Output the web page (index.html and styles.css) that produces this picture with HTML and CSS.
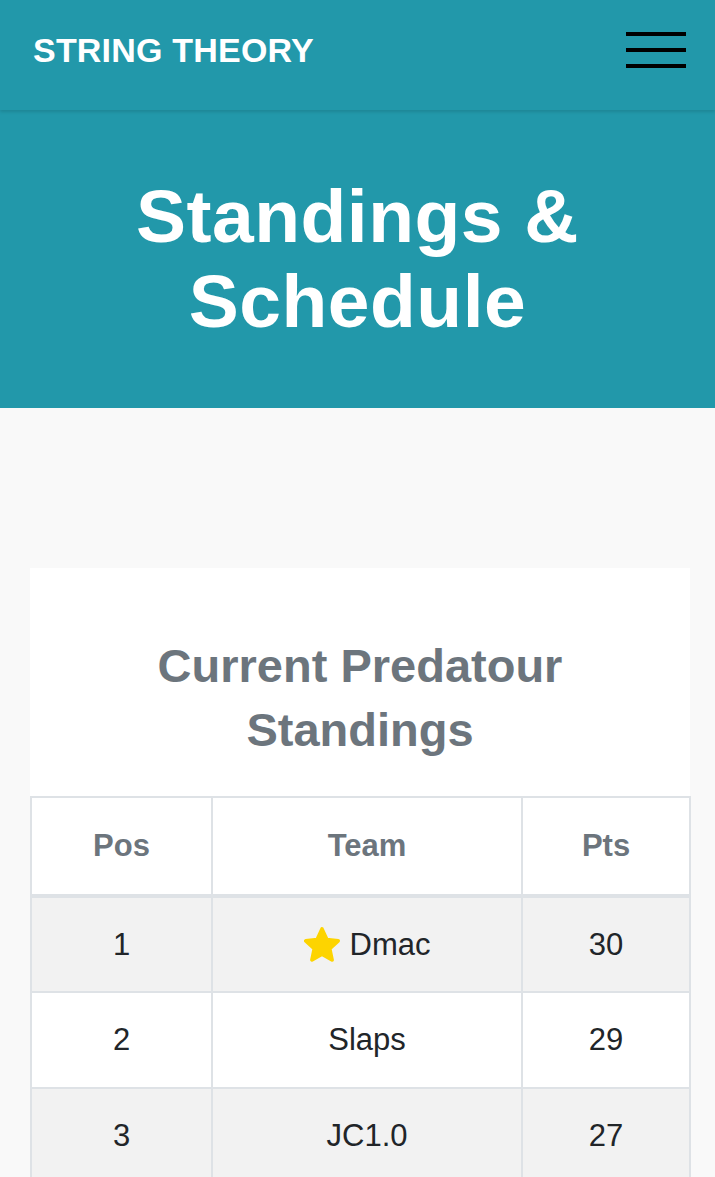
FILE: index.html
```html
<!DOCTYPE html>
<html lang="en">
<head>
<meta charset="utf-8">
<title>Standings &amp; Schedule</title>
<link rel="stylesheet" href="styles.css">
</head>
<body>
<header class="navbar">
  <a class="brand" href="#">STRING THEORY</a>
  <button class="toggler" aria-label="Menu">
    <span class="bar"></span><span class="bar"></span><span class="bar"></span>
  </button>
</header>
<section class="hero">
  <h1 class="hero-title">Standings &amp; Schedule</h1>
</section>
<main class="content">
  <div class="card">
    <h2 class="card-title">Current Predatour Standings</h2>
    <table class="standings">
      <thead>
        <tr><th class="c-pos">Pos</th><th class="c-team">Team</th><th class="c-pts">Pts</th></tr>
      </thead>
      <tbody>
        <tr class="odd"><td>1</td><td><div class="team"><svg class="star" viewBox="2 1.5 20 20" width="36" height="36"><path d="M12 2.6l2.7 5.9 6.3.7-4.7 4.3 1.3 6.3L12 16.6l-5.6 3.2 1.3-6.3L3 9.2l6.3-.7z" fill="#fdd400" stroke="#fdd400" stroke-width="2" stroke-linejoin="round"/></svg><span>Dmac</span></div></td><td>30</td></tr>
        <tr><td>2</td><td>Slaps</td><td>29</td></tr>
        <tr class="odd"><td>3</td><td>JC1.0</td><td>27</td></tr>
      </tbody>
    </table>
  </div>
</main>
</body>
</html>
```

FILE: styles.css
```css
* { box-sizing: border-box; }
html, body { margin: 0; padding: 0; }
body {
  background: #f9f9f9;
  font-family: "Liberation Sans", Arial, sans-serif;
  color: #212529;
}
.navbar {
  position: relative;
  z-index: 2;
  height: 110px;
  background: #2298aa;
  display: flex;
  align-items: center;
  justify-content: space-between;
  padding: 0 29px 10px 33px;
  box-shadow: 0 2px 3px rgba(0, 0, 0, 0.12);
}
.brand {
  color: #fff;
  font-weight: 700;
  font-size: 34px;
  text-decoration: none;
  letter-spacing: 0.2px;
}
.toggler {
  background: none;
  border: 0;
  padding: 0;
  width: 60px;
  display: flex;
  flex-direction: column;
  gap: 12px;
}
.bar {
  display: block;
  height: 4px;
  width: 60px;
  background: #000;
}
.hero {
  background: #2298aa;
  padding: 64px 20px 64px;
  height: 298px;
}
.hero-title {
  margin: 0;
  color: #fff;
  text-align: center;
  font-size: 75px;
  line-height: 85px;
  font-weight: 700;
  letter-spacing: 0.5px;
}
.content {
  padding: 160px 25px 60px 30px;
}
.card {
  background: #fff;
  width: 660px;
}
.card-title {
  margin: 0;
  padding: 66px 40px 34px;
  text-align: center;
  color: #6c757d;
  font-size: 47px;
  line-height: 64px;
  font-weight: 700;
}
.standings {
  width: 100%;
  border-collapse: collapse;
  table-layout: fixed;
}
.standings th, .standings td {
  border: 2px solid #dee2e6;
  text-align: center;
  vertical-align: middle;
  height: 96px;
  padding: 0;
}
.standings th {
  color: #6c757d;
  font-size: 31px;
  font-weight: 700;
  height: 99px;
  border-bottom-width: 4px;
}
.standings td {
  font-size: 31px;
  color: #212529;
}
.c-pos { width: 181px; }
.c-team { width: 310px; }
.c-pts { width: 168px; }
.standings tr.odd td { background: #f2f2f2; }
.team {
  display: flex;
  justify-content: center;
  align-items: center;
  gap: 10px;
}
.star { display: block; flex: none; }
```
